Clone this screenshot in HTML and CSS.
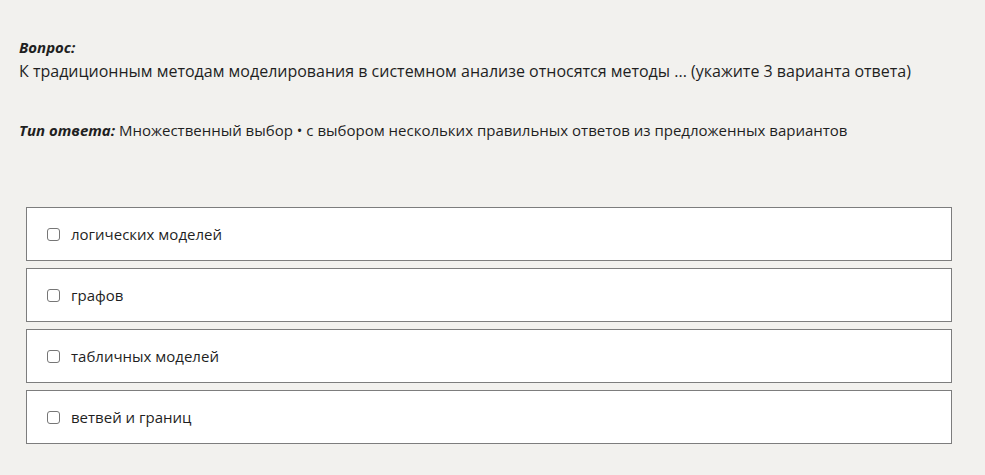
FILE: index.html
```html
<!DOCTYPE html>
<html lang="ru">
<head>
<meta charset="utf-8">
<link rel="stylesheet" href="styles.css">
</head>
<body>
<main class="page">
  <section class="question">
    <div class="label">Вопрос:</div>
    <div class="text">К традиционным методам моделирования в системном анализе относятся методы ... (укажите 3 варианта ответа)</div>
  </section>
  <div class="type"><span class="label">Тип ответа:</span> Множественный выбор • с выбором нескольких правильных ответов из предложенных вариантов</div>
  <ul class="answers">
    <li class="answer"><span class="box"></span><span>логических моделей</span></li>
    <li class="answer"><span class="box"></span><span>графов</span></li>
    <li class="answer"><span class="box"></span><span>табличных моделей</span></li>
    <li class="answer"><span class="box"></span><span>ветвей и границ</span></li>
  </ul>
</main>
</body>
</html>
```
FILE: styles.css
```css
html, body {
  margin: 0;
  background: #f2f1ee;
}
body {
  font-family: "Open Sans", "Noto Sans", sans-serif;
  color: #1f1f1f;
}
.page {
  padding: 36px 33px 0 19px;
}
.label {
  font-weight: 700;
  font-style: italic;
  font-size: 15px;
}
.question .label {
  line-height: 22px;
}
.question .text {
  font-size: 16px;
  line-height: 27px;
}
.type {
  margin-top: 34px;
  font-size: 15px;
  line-height: 22px;
}
.answers {
  list-style: none;
  margin: 66px 0 0 7px;
  padding: 0;
  display: flex;
  flex-direction: column;
  gap: 7px;
}
.answer {
  height: 52px;
  background: #fff;
  border: 1px solid #7d7d7d;
  display: flex;
  align-items: center;
  padding-left: 20px;
  font-size: 15px;
}
.box {
  width: 11px;
  height: 11px;
  border: 1px solid #767676;
  border-radius: 3px;
  margin-right: 11px;
  background: #fff;
}
```
